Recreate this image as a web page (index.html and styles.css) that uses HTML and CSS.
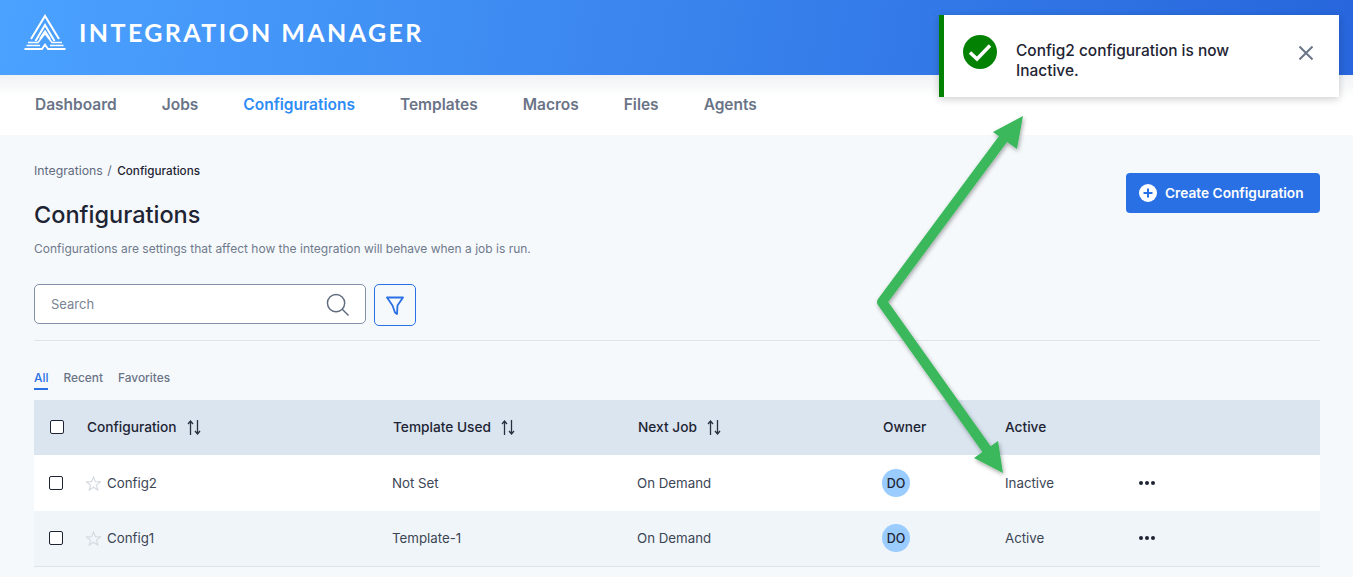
FILE: index.html
```html
<!DOCTYPE html>
<html lang="en">
<head>
  <meta charset="UTF-8" />
  <title>Integration Manager</title>
  <link rel="stylesheet" href="styles.css">
</head>
<body>
  <header class="topbar">
    <svg class="logo" viewBox="0 0 42 36" fill="none" stroke="#fff" stroke-width="2">
      <path d="M7 25 L21 2 L35 25"/>
      <path d="M11.500 27 L21 11 L30.500 27"/>
      <path d="M16 25 L21 17.500 L26 25"/>
      <path d="M4 28.500 H14 L21 19.500 L28 28.500 H38" stroke-width="1.500"/>
      <path d="M2.500 31.500 H16 M26 31.500 H39.500" stroke-width="1.300"/>
      <path d="M0.500 35 H18 L21 30.500 L24 35 H41.500" stroke-width="1.800"/>
    </svg>
    <span class="brand">INTEGRATION MANAGER</span>
  </header>

  <nav class="mainnav">
    <a>Dashboard</a>
    <a>Jobs</a>
    <a class="current">Configurations</a>
    <a>Templates</a>
    <a>Macros</a>
    <a>Files</a>
    <a>Agents</a>
  </nav>

  <main class="content">
    <div class="page-head">
      <div>
        <div class="crumbs">Integrations <span class="sep">/</span> <b>Configurations</b></div>
        <h1>Configurations</h1>
        <p class="sub">Configurations are settings that affect how the integration will behave when a job is run.</p>
      </div>
      <button class="create">
        <svg viewBox="0 0 18 18" width="18" height="18">
          <circle cx="9" cy="9" r="9" fill="#fff"/>
          <path d="M9 4.500 V13.500 M4.500 9 H13.500" stroke="#2870e4" stroke-width="2"/>
        </svg>
        Create Configuration
      </button>
    </div>

    <div class="tools">
      <div class="search">
        <span>Search</span>
        <svg viewBox="0 0 24 24" width="23" height="23" fill="none" stroke="#5f6b7e" stroke-width="1.500">
          <circle cx="10.500" cy="10.500" r="9"/>
          <path d="M17 17 L23.500 23.500"/>
        </svg>
      </div>
      <button class="filter">
        <svg viewBox="0 0 18 19" width="18" height="19" fill="none" stroke="#2870e4" stroke-width="1.800" stroke-linejoin="round">
          <path d="M1 1.500 H17 L11.500 9.500 L11 18 L9 16.500 L6.500 9.500 Z"/>
        </svg>
      </button>
    </div>

    <div class="tabs">
      <a class="on">All</a>
      <a>Recent</a>
      <a>Favorites</a>
    </div>

    <div class="grid">
      <div class="row head">
        <div class="c-name"><i class="box"></i>Configuration <svg class="sort" viewBox="0 0 15 15" width="15" height="15"><path d="M3.500 15 V1 M1 4 L3.500 1 L6 4 M10.500 0 V14 M8 11 L10.500 14 L13 11"/></svg></div>
        <div class="c-tpl">Template Used <svg class="sort" viewBox="0 0 15 15" width="15" height="15"><path d="M3.500 15 V1 M1 4 L3.500 1 L6 4 M10.500 0 V14 M8 11 L10.500 14 L13 11"/></svg></div>
        <div class="c-next">Next Job <svg class="sort" viewBox="0 0 15 15" width="15" height="15"><path d="M3.500 15 V1 M1 4 L3.500 1 L6 4 M10.500 0 V14 M8 11 L10.500 14 L13 11"/></svg></div>
        <div class="c-owner">Owner</div>
        <div class="c-active">Active</div>
      </div>
      <div class="row body">
        <div class="c-name"><i class="box"></i><svg class="star" viewBox="0 0 16 16" width="15" height="15"><path d="M8 1 L10 6 L15.400 6.300 L11.200 9.700 L12.600 15 L8 12 L3.400 15 L4.800 9.700 L0.600 6.300 L6 6 Z"/></svg>Config2</div>
        <div class="c-tpl">Not Set</div>
        <div class="c-next">On Demand</div>
        <div class="c-owner"><span class="avatar">DO</span></div>
        <div class="c-active">Inactive</div>
        <div class="more"><i></i><i></i><i></i></div>
      </div>
      <div class="row body alt">
        <div class="c-name"><i class="box"></i><svg class="star" viewBox="0 0 16 16" width="15" height="15"><path d="M8 1 L10 6 L15.400 6.300 L11.200 9.700 L12.600 15 L8 12 L3.400 15 L4.800 9.700 L0.600 6.300 L6 6 Z"/></svg>Config1</div>
        <div class="c-tpl">Template-1</div>
        <div class="c-next">On Demand</div>
        <div class="c-owner"><span class="avatar">DO</span></div>
        <div class="c-active">Active</div>
        <div class="more"><i></i><i></i><i></i></div>
      </div>
    </div>
  </main>

  <!-- annotation drawn over the screenshot -->
  <svg class="arrows" viewBox="0 0 1353 577" width="1353" height="577">
    <defs>
      <filter id="shade" x="-10%" y="-10%" width="125%" height="125%">
        <feDropShadow dx="1" dy="2" stdDeviation="2" flood-color="#000" flood-opacity="0.35"/>
      </filter>
    </defs>
    <g filter="url(#shade)">
      <path d="M882 302 L1006 135 M882 302 L990 454" fill="none" stroke="#3bb85b" stroke-width="10" stroke-linecap="round"/>
      <path d="M1023 116 L993 132 L1017 149 Z M1003 473 L974 458 L998 441 Z" fill="#3bb85b"/>
    </g>
  </svg>

  <div class="toast">
    <svg viewBox="0 0 34 34" width="34" height="34">
      <circle cx="17" cy="17" r="17" fill="#038103"/>
      <path d="M7 17.500 L14 24 L27 10.500" fill="none" stroke="#fff" stroke-width="3.500"/>
    </svg>
    <p>Config2 configuration is now Inactive.</p>
    <svg class="close" viewBox="0 0 14 14" width="14" height="14" fill="none" stroke="#6a7587" stroke-width="2">
      <path d="M0.500 0.500 L13.500 13.500 M13.500 0.500 L0.500 13.500"/>
    </svg>
  </div>
</body>
</html>
```

FILE: styles.css
```css
* {
  box-sizing: border-box;
}
html, body {
  margin: 0;
  height: 577px;
  overflow: hidden;
}
body {
  font-family: "Inter", "Open Sans", sans-serif;
  background: #f6f9fc;
  color: #1e2433;
}

.topbar {
  height: 75px;
  padding: 0 0 11px 24px;
  display: flex;
  align-items: center;
  gap: 13px;
  background: linear-gradient(100deg, #4ba2ff 0%, #2766dc 100%);
}
.logo {
  width: 42px;
  height: 36px;
}
.brand {
  font-family: "Lato", sans-serif;
  font-weight: 700;
  font-size: 25px;
  letter-spacing: 2.4px;
  color: #fff;
}

.mainnav {
  height: 60px;
  padding: 0 0 2px 35px;
  display: flex;
  align-items: center;
  gap: 45px;
  background: linear-gradient(#f0f2f5 0, #fff 22px);
  font-size: 15.500px;
  font-weight: 600;
  color: #6a7487;
}
.mainnav .current {
  color: #2e8cf5;
}

.content {
  padding: 0 33px 0 34px;
}
.page-head {
  display: flex;
  justify-content: space-between;
  align-items: flex-start;
  padding-top: 29px;
}
.crumbs {
  font-size: 12.300px;
  line-height: 14px;
  color: #5f6b7e;
}
.crumbs .sep {
  margin: 0 2px 0 1px;
}
.crumbs b {
  font-size: 11.700px;
  font-weight: 500;
  color: #1e2433;
}
h1 {
  margin: 23px 0 0;
  font-size: 23.500px;
  line-height: 28px;
  font-weight: 500;
}
.sub {
  margin: 12px 0 0;
  font-size: 12px;
  line-height: 16px;
  color: #6f7a8c;
}
.create {
  margin-top: 9px;
  width: 194px;
  height: 40px;
  padding: 0 0 0 13px;
  display: flex;
  align-items: center;
  gap: 8px;
  border: 0;
  border-radius: 4px;
  background: #2870e4;
  color: #fff;
  font: 600 13.700px "Inter", sans-serif;
}

.tools {
  display: flex;
  gap: 8px;
  align-items: flex-start;
  margin-top: 27px;
  padding-bottom: 14px;
  border-bottom: 1px solid #dfe4ea;
}
.search {
  width: 332px;
  height: 40px;
  padding: 0 16px;
  display: flex;
  align-items: center;
  justify-content: space-between;
  background: #fff;
  border: 1px solid #8490a8;
  border-radius: 5px;
  font-size: 13px;
  color: #7a8493;
}
.filter {
  width: 42px;
  height: 42px;
  padding: 0;
  display: flex;
  align-items: center;
  justify-content: center;
  background: #f6f9fc;
  border: 1px solid #2870e4;
  border-radius: 5px;
}

.tabs {
  display: flex;
  gap: 15px;
  margin-top: 30px;
  height: 29px;
  font-size: 11.900px;
  font-weight: 500;
  color: #6a7487;
}
.tabs a {
  height: 19px;
  line-height: 13px;
}
.tabs .on {
  color: #2870e4;
  border-bottom: 2px solid #2870e4;
}

.row {
  display: flex;
  align-items: center;
  font-size: 13.300px;
}
.row.head {
  height: 55px;
  padding-bottom: 2px;
  background: #dae5f0;
  font-size: 13.700px;
  font-weight: 500;
}
.row.body {
  height: 56px;
  background: #fff;
  color: #3c4555;
}
.row.alt {
  padding-bottom: 1px;
  background: #f0f5f9;
  border-bottom: 1px solid #dfe4ea;
}
.c-name {
  width: 358px;
  display: flex;
  align-items: center;
  padding-left: 15px;
}
.c-tpl {
  width: 245px;
  display: flex;
  align-items: center;
}
.c-next {
  width: 246px;
  display: flex;
  align-items: center;
}
.c-owner {
  width: 122px;
}
.c-active {
  width: 133px;
}
.head .c-name {
  padding-left: 16px;
}
.head .c-tpl,
.head .c-next {
  padding-left: 1px;
}
.box {
  width: 14px;
  height: 14px;
  margin-right: 22px;
  background: #fff;
  border: 1.500px solid #1e2433;
  border-radius: 2px;
}
.head .box {
  margin-right: 23px;
}
.star {
  margin: 0 6px 0 1px;
  fill: none;
  stroke: #d5dae1;
  stroke-width: 1.200;
}
.sort {
  margin: 2px 0 0 10px;
  fill: none;
  stroke: #27303f;
  stroke-width: 1.300;
}
.avatar {
  width: 28px;
  height: 28px;
  margin-left: -1px;
  display: flex;
  align-items: center;
  justify-content: center;
  border-radius: 50%;
  background: #9accff;
  font-size: 12.500px;
  font-weight: 500;
  color: #1e2433;
}
.more {
  display: flex;
  gap: 2px;
  margin-left: 1px;
}
.more i {
  width: 4px;
  height: 4px;
  border-radius: 50%;
  background: #1e2433;
}

.arrows {
  position: absolute;
  top: 0;
  left: 0;
  pointer-events: none;
}
.toast {
  position: absolute;
  top: 15px;
  left: 939px;
  width: 400px;
  height: 82px;
  padding: 20px 26px 0 19px;
  display: flex;
  align-items: flex-start;
  background: #fff;
  border-left: 5px solid #038103;
  box-shadow: 0 2px 8px rgba(0,0,0,0.2);
}
.toast p {
  flex: 1;
  margin: 6px 0 0 19px;
  padding-right: 40px;
  font-size: 15.450px;
  line-height: 20px;
  font-weight: 500;
  color: #1e2433;
}
.close {
  margin-top: 11px;
}
```
